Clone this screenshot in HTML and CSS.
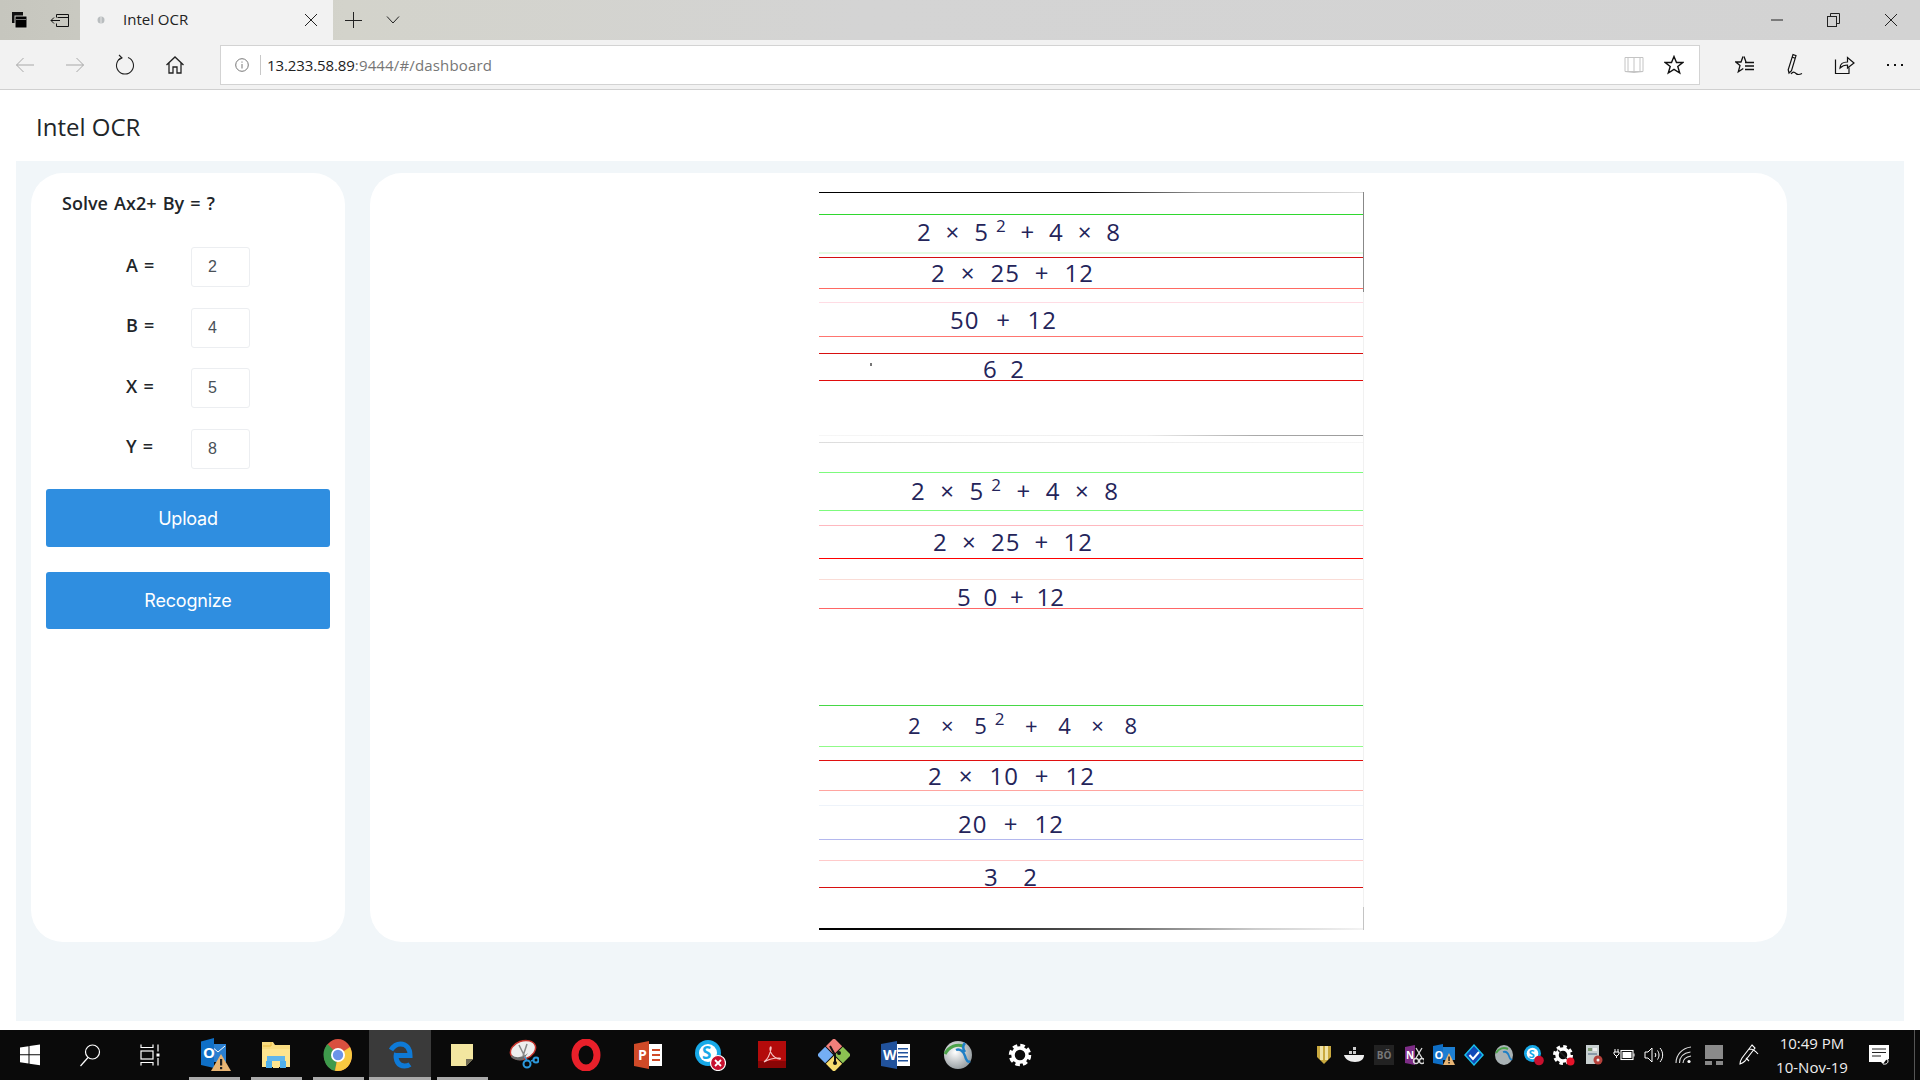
FILE: index.html
```html
<!DOCTYPE html>
<html lang="en">
<head>
<meta charset="utf-8">
<title>Intel OCR</title>
<link rel="stylesheet" href="styles.css">
</head>
<body>
<div class="titlebar">
  <div class="tbtn"><svg width="20" height="20" viewBox="0 0 20 20"><rect x="2" y="2" width="11" height="11" fill="#111"/><rect x="5" y="6" width="12" height="12" fill="#000" stroke="#d0d0ca" stroke-width="1"/><rect x="6" y="9" width="10" height="1" fill="#777"/></svg></div>
  <div class="tbtn"><svg width="20" height="20" viewBox="0 0 20 20" fill="none" stroke="#111"><path d="M6.500 4.500h12v12h-12v-3M6.500 7.500v-3M7.500 7.500h11"/><path d="M1 10.500h9M4 7.500l-3 3 3 3"/></svg></div>
  <div class="tab">
    <svg class="favicon" width="10" height="10" viewBox="0 0 10 10"><circle cx="5" cy="5" r="3.500" fill="#b9bdbf"/><path d="M5 1.500v7" stroke="#e6e6e6"/></svg>
    <span class="tabtitle">Intel OCR</span>
    <svg class="tabclose" width="14" height="14" viewBox="0 0 14 14" stroke="#222" fill="none"><path d="M1 1l12 12M13 1L1 13"/></svg>
  </div>
  <div class="tbtn"><svg width="18" height="18" viewBox="0 0 18 18" stroke="#222" fill="none"><path d="M9.500 1v16M1 9.500h17"/></svg></div>
  <div class="tbtn"><svg width="14" height="10" viewBox="0 0 14 10" stroke="#222" fill="none"><path d="M1 1.500l6 6.500 6-6.500"/></svg></div>
  <div class="winctl">
    <div class="wbtn"><svg width="12" height="2" viewBox="0 0 12 2" stroke="#222"><path d="M0 1h12"/></svg></div>
    <div class="wbtn"><svg width="13" height="14" viewBox="0 0 13 14" stroke="#222" fill="none"><rect x=".5" y="3.500" width="9" height="10"/><path d="M3.500 3.500v-3h9v10h-3"/></svg></div>
    <div class="wbtn"><svg width="14" height="14" viewBox="0 0 14 14" stroke="#222" fill="none"><path d="M1 1l12 12M13 1L1 13"/></svg></div>
  </div>
</div>

<div class="toolbar">
  <div class="navbtn"><svg width="20" height="16" viewBox="0 0 20 16" stroke="#a8a8a8" fill="none"><path d="M19 8H1.500M8.500 1l-7 7 7 7"/></svg></div>
  <div class="navbtn"><svg width="20" height="16" viewBox="0 0 20 16" stroke="#a8a8a8" fill="none"><path d="M1 8h17.500M11.500 1l7 7-7 7"/></svg></div>
  <div class="navbtn"><svg width="20" height="22" viewBox="0 0 20 22" stroke="#222" fill="none" stroke-width="1.100"><path d="M7 3.600A8.500 8.500 0 1 0 13 3.600"/><path d="M4 1l3 3-3.500 2"/></svg></div>
  <div class="navbtn"><svg width="20" height="20" viewBox="0 0 20 20" stroke="#222" fill="none" stroke-width="1.300"><path d="M1.500 10L10 2l8.500 8M4 8v10h4v-6h4v6h4V8"/></svg></div>
  <div class="address">
    <svg class="info" width="14" height="14" viewBox="0 0 14 14" fill="none" stroke="#777"><circle cx="7" cy="7" r="6.300"/><path d="M7 6v4.500M7 3.500v1.200"/></svg>
    <span class="url"><span class="urlhost">13.233.58.89</span>:9444/#/dashboard</span>
    <svg class="book" width="20" height="18" viewBox="0 0 20 18" fill="none" stroke="#c4c4c4"><path d="M1 1.500h18v14H1zM10 1.500v15M1 15.500l9 1 9-1"/><path d="M4 1.500v14M16 1.500v14"/></svg>
    <svg class="star" width="20" height="20" viewBox="0 0 20 20" fill="none" stroke="#111" stroke-width="1.400"><path d="M10 1.500l2.500 6h6.300l-5 4 1.900 6.500L10 14.300 4.300 18l1.900-6.500-5-4h6.300z"/></svg>
  </div>
  <div class="tools">
    <div class="navbtn"><svg width="20" height="20" viewBox="0 0 20 20" fill="none" stroke="#111" stroke-width="1.300"><path d="M8 1.500L6 7H.8l4.200 3.600-1.700 6.200 5-3.300"/><path d="M9 1.500L11 7M10 7.500h9M10 11h9M10 14.500h9"/></svg></div>
    <div class="navbtn"><svg width="20" height="24" viewBox="0 0 20 24" fill="none" stroke="#111" stroke-width="1.200"><path d="M8 1.500l3 1.200-4.500 15L4 20l-.8-3.300zM7 4l3 1.200"/><path d="M6 21c2-3 3.500-2 5-.5s3 1.500 6 0"/></svg></div>
    <div class="navbtn"><svg width="22" height="20" viewBox="0 0 22 20" fill="none" stroke="#111" stroke-width="1.200"><path d="M1.500 4.500v14h13.500v-6M1.500 18.500h13.500"/><path d="M6 13c0-4 3-6 7.500-6V2.500L20 8l-6.500 5V10C10 10 8 11 6 13z"/></svg></div>
    <div class="navbtn"><svg width="20" height="4" viewBox="0 0 20 4" fill="#111"><rect x="2" y="1" width="2" height="2"/><rect x="9" y="1" width="2" height="2"/><rect x="16" y="1" width="2" height="2"/></svg></div>
  </div>
</div>

<div class="page">
  <header class="apphead">Intel OCR</header>
  <main class="content">
    <section class="card side">
      <h2 class="solve">Solve Ax2+ By = ?</h2>
      <div class="field"><label class="flabel">A =</label><input class="finput" value="2"></div>
      <div class="field"><label class="flabel">B =</label><input class="finput" value="4"></div>
      <div class="field"><label class="flabel">X =</label><input class="finput" value="5"></div>
      <div class="field"><label class="flabel">Y =</label><input class="finput" value="8"></div>
      <button class="action first">Upload</button>
      <button class="action second">Recognize</button>
    </section>
    <section class="card viewer">
      <div class="sheet">
        <i class="rule k top"></i>
        <i class="rule r2"></i><i class="rule r3"></i><i class="rule r4"></i><i class="rule r5"></i><i class="rule r6"></i><i class="rule r7"></i><i class="rule r8"></i><i class="rule r9"></i><i class="rule r10"></i>
        <i class="rule r11"></i><i class="rule r12"></i><i class="rule r13"></i><i class="rule r14"></i><i class="rule r15"></i><i class="rule r16"></i>
        <i class="rule r17"></i><i class="rule r18"></i><i class="rule r19"></i><i class="rule r20"></i><i class="rule r21"></i><i class="rule r22"></i><i class="rule r23"></i><i class="rule r24"></i><i class="rule r25"></i>
        <i class="rule k bottom"></i>
        <i class="edge e1"></i><i class="edge e2"></i><i class="edge e3"></i><i class="speck"></i>
        <div class="hw l1">2 × 5<sup>2</sup> + 4 × 8</div>
        <div class="hw l2">2 × 25 + 12</div>
        <div class="hw l3">50 + 12</div>
        <div class="hw l4">6 2</div>
        <div class="hw l5">2 × 5<sup>2</sup> + 4 × 8</div>
        <div class="hw l6">2 × 25 + 12</div>
        <div class="hw l7">5 0 + 12</div>
        <div class="hw l8">2 × 5<sup>2</sup> + 4 × 8</div>
        <div class="hw l9">2 × 10 + 12</div>
        <div class="hw l10">20 + 12</div>
        <div class="hw l11">3 2</div>
      </div>
    </section>
  </main>
</div>

<footer class="taskbar">
  <div class="sysbtn"><svg width="22" height="22" viewBox="0 0 22 22" fill="#fff"><path d="M1 3.500l8.500-1.200V10.300H1zM10.500 2.100L21 .6v9.700H10.500zM1 11.300h8.500v8.200L1 18.300zM10.500 11.300H21v10L10.500 19.800z"/></svg></div>
  <div class="sysbtn"><svg width="22" height="24" viewBox="0 0 22 24" fill="none" stroke="#fff" stroke-width="1.200"><circle cx="13.500" cy="9" r="7"/><path d="M9 14.500L1.500 23"/></svg></div>
  <div class="sysbtn"><svg width="20" height="22" viewBox="0 0 20 22" fill="none" stroke="#fff" stroke-width="1.200"><path d="M1 .5v3h12v-3M1 21.500v-3h12v3"/><rect x="1" y="7" width="12" height="8"/><path d="M18 .5v7M18 14v7.500"/><rect x="16.500" y="9.500" width="3" height="3" fill="#fff" stroke="none"/></svg></div>
  <div class="apps">
    <div class="app on first-app"><svg width="32" height="34" viewBox="0 0 32 34"><path d="M10 6h16v18H10z" fill="#2a7fd0"/><path d="M11 8l7 6 7-6" fill="none" stroke="#fff"/><path d="M1 3.500L14 0v30L1 27z" fill="#0f6fc6"/><text class="ic-text" x="3" y="20" font-size="15" fill="#fff">O</text><path d="M21 16l10 17H11z" fill="#e8b574"/><rect x="20" y="21" width="2.200" height="6.500" fill="#222"/><rect x="20" y="29" width="2.200" height="2.200" fill="#222"/></svg></div>
    <div class="app on"><svg width="30" height="28" viewBox="0 0 30 28"><path d="M1 1h11l2 3h15v22H1z" fill="#f9dc80"/><rect x="1" y="8" width="28" height="18" fill="#fde58f"/><path d="M10 1v4h-8" fill="none" stroke="#e8b93f"/><path d="M6 15h18v5H6z" fill="#5fb6ec"/><path d="M5 20h6v7H5zM19 20h6v7h-6z" fill="#4fb0ec"/><rect x="12" y="23" width="6" height="4" fill="#fde58f"/></svg></div>
    <div class="app on"><svg width="30" height="32" viewBox="0 0 30 32"><ellipse cx="15" cy="16" rx="14" ry="16" fill="#d9503f"/><path d="M15 16L4.500 5A14 16 0 0 0 12 31.800z" fill="#3e9a4b"/><path d="M15 16L12 31.800c1 .2 2 .2 3 .2 8 0 14-7 14-16 0-3-1-6-2-8z" fill="#f7c940"/><circle cx="15" cy="16" r="7" fill="#fff"/><circle cx="15" cy="16" r="5.200" fill="#6b94e8"/></svg></div>
    <div class="app on cur"><svg width="26" height="28" viewBox="0 0 26 28" fill="none" stroke="#0e7ad7" stroke-width="5"><path d="M9 14.500h14C23 7 19 3 13.500 3c-3.500 0-7 2-9.500 6"/><path d="M9.500 12c-1.500 7 1.500 13 8 13 2 0 4-.5 5.500-1.500"/></svg></div>
    <div class="app on"><svg width="24" height="24" viewBox="0 0 24 24"><path d="M1 1h22v15l-7 7H1z" fill="#f3e6a0"/><path d="M23 16h-7v7z" fill="#6f6a55"/></svg></div>
    <div class="app"><svg width="30" height="32" viewBox="0 0 30 32"><ellipse cx="14" cy="11" rx="13" ry="9" transform="rotate(-20 14 11)" fill="#eee" stroke="#c7332c" stroke-width="1.500"/><path d="M3 16c4 4 12 2 16-2l-5 7c-4 1-9 0-12-3z" fill="#6c6c6c"/><path d="M18 5l-4 12M10 6l6 12" stroke="#888" stroke-width="1.500"/><circle cx="18" cy="25" r="3.500" fill="none" stroke="#2c9ade" stroke-width="2"/><circle cx="27" cy="21" r="2.500" fill="none" stroke="#2c9ade" stroke-width="2"/><path d="M16 18l2 4M22 22l3-1" stroke="#2c9ade" stroke-width="1.500"/></svg></div>
    <div class="app"><svg width="30" height="32" viewBox="0 0 30 32" fill="none"><ellipse cx="15" cy="16" rx="11" ry="13" stroke="#e8202a" stroke-width="7"/></svg></div>
    <div class="app"><svg width="28" height="28" viewBox="0 0 28 28"><rect x="13" y="3" width="15" height="22" fill="#fff"/><path d="M0 3l15-3v28L0 25z" fill="#cf4a28"/><rect x="18" y="8" width="8" height="2" fill="#cf4a28"/><rect x="18" y="13" width="8" height="2" fill="#cf4a28"/><rect x="18" y="18" width="8" height="2" fill="#cf4a28"/><text class="ic-text" x="4" y="19" font-size="14" fill="#fff">P</text></svg></div>
    <div class="app"><svg width="32" height="32" viewBox="0 0 32 32"><circle cx="14" cy="14" r="13" fill="#17a9e8"/><circle cx="14" cy="14" r="9" fill="#fff"/><text class="ic-text" x="8" y="20" font-size="17" fill="#17a9e8">S</text><circle cx="24" cy="24" r="7.500" fill="#c8102e" stroke="#fff" stroke-width="1.200"/><path d="M21 21l6 6M27 21l-6 6" stroke="#fff" stroke-width="1.800"/></svg></div>
    <div class="app"><svg width="28" height="28" viewBox="0 0 28 28"><rect width="28" height="27" fill="#b30b0b"/><rect y="20" width="28" height="7" fill="#8a0505"/><path d="M6 21c4-3 6-8 7-13 .5-3-1-3-1 0s3 9 9 10c2 .4 2-1 0-1-4 0-10 1-15 4z" fill="none" stroke="#f5c4c4" stroke-width="1.200"/></svg></div>
    <div class="app"><svg width="32" height="32" viewBox="0 0 32 32"><g transform="rotate(45 16 16)"><rect x="4" y="4" width="11.500" height="11.500" fill="#f07f7b"/><rect x="16.500" y="4" width="11.500" height="11.500" fill="#8cc152"/><rect x="4" y="16.500" width="11.500" height="11.500" fill="#74aef4"/><rect x="16.500" y="16.500" width="11.500" height="11.500" fill="#f7dc6f"/></g><path d="M12 7l5 9v8" stroke="#111" stroke-width="2" fill="none"/><circle cx="21" cy="14" r="2" fill="#111"/><circle cx="17" cy="24" r="2" fill="#111"/></svg></div>
    <div class="app"><svg width="30" height="28" viewBox="0 0 30 28"><rect x="13" y="3" width="16" height="22" fill="#fff"/><path d="M0 3l16-3v28L0 25z" fill="#21529c"/><rect x="17" y="7" width="10" height="1.500" fill="#21529c"/><rect x="17" y="11" width="10" height="1.500" fill="#21529c"/><rect x="17" y="15" width="10" height="1.500" fill="#21529c"/><rect x="17" y="19" width="10" height="1.500" fill="#21529c"/><text class="ic-text" x="2" y="19" font-size="14" fill="#fff">W</text></svg></div>
    <div class="app"><svg width="30" height="30" viewBox="0 0 30 30"><defs><radialGradient id="glb" cx=".4" cy=".4" r=".7"><stop offset="0" stop-color="#fff"/><stop offset="1" stop-color="#8a9296"/></radialGradient></defs><circle cx="15" cy="15" r="14" fill="url(#glb)"/><path d="M2 14C6 6 14 4 20 6" fill="none" stroke="#4ca24a" stroke-width="3"/><path d="M13 10c4-2 8 2 9 6s3 7 5 5M22 3c-3 3-2 6 0 9" fill="none" stroke="#1e7fc6" stroke-width="2.500"/></svg></div>
    <div class="app"><svg width="24" height="24" viewBox="0 0 24 24" fill="none" stroke="#fff"><circle cx="12" cy="12" r="7" stroke-width="3.500"/><circle cx="12" cy="12" r="9.500" stroke-width="3.500" stroke-dasharray="4.500 2.960"/></svg></div>
  </div>
  <div class="tray">
    <div class="ti"><svg width="16" height="20" viewBox="0 0 16 20"><path d="M1 1h14v11l-7 7-7-7z" fill="#c9a93f"/><path d="M4 1h3v14H4zM9 1h3v14H9z" fill="#f0e3a8"/></svg></div>
    <div class="ti"><svg width="20" height="16" viewBox="0 0 20 16" fill="#eee"><path d="M0 8h20c0 4-3 7-9 7-6 0-10-3-11-7z"/><path d="M5 4h3v3H5zM9 4h3v3H9zM9 0h3v3H9z" fill="#ccc"/></svg></div>
    <div class="ti"><div class="bo"><span>B</span><span>Ö</span></div></div>
    <div class="ti"><svg width="20" height="20" viewBox="0 0 20 20"><path d="M1 2l10-2v20L1 18z" fill="#7d2d86"/><text class="ic-text" x="2" y="14" font-size="10" fill="#fff">N</text><path d="M12 3l6 10M18 3l-6 10" stroke="#ddd" stroke-width="1.300"/><circle cx="12" cy="16" r="2.500" fill="none" stroke="#ddd" stroke-width="1.300"/><circle cx="18" cy="16" r="2.500" fill="none" stroke="#ddd" stroke-width="1.300"/></svg></div>
    <div class="ti"><svg width="22" height="22" viewBox="0 0 22 22"><path d="M9 3h13v13H9z" fill="#1d7fd2"/><path d="M0 2l10-2v21L0 19z" fill="#0f6fc6"/><text class="ic-text" x="1.500" y="14.500" font-size="11" fill="#fff">O</text><path d="M16 9l6 12H10z" fill="#e8b574"/><rect x="15.300" y="12.500" width="1.500" height="4.500" fill="#222"/><rect x="15.300" y="18" width="1.500" height="1.500" fill="#222"/></svg></div>
    <div class="ti"><svg width="20" height="22" viewBox="0 0 20 22"><path d="M10 0l10 11-10 11L0 11z" fill="#18c3ee"/><path d="M10 2l8 9-8 9-8-9z" fill="#1148b8"/><path d="M5.500 11l3.500 4 6-7" fill="none" stroke="#fff" stroke-width="2"/></svg></div>
    <div class="ti"><svg width="18" height="20" viewBox="0 0 18 20"><ellipse cx="9" cy="10" rx="9" ry="10" fill="#a9b2b4"/><path d="M1 8c3-5 8-6 12-4" fill="none" stroke="#4ca24a" stroke-width="2"/><path d="M8 7c3-1 5 1 6 4s2 4 3 3" fill="none" stroke="#1e7fc6" stroke-width="1.800"/></svg></div>
    <div class="ti"><svg width="20" height="22" viewBox="0 0 20 22"><circle cx="8.500" cy="9.500" r="8.500" fill="#17a9e8"/><circle cx="8.500" cy="9.500" r="5.800" fill="#fff"/><text class="ic-text" x="4.800" y="13.500" font-size="11" fill="#17a9e8">S</text><circle cx="15" cy="16.500" r="4.800" fill="#c8102e"/></svg></div>
    <div class="ti"><svg width="22" height="22" viewBox="0 0 22 22" fill="none"><circle cx="10" cy="11" r="6" stroke="#fff" stroke-width="3.500"/><circle cx="10" cy="11" r="8.500" stroke="#fff" stroke-width="3" stroke-dasharray="3.500 3.170"/><path d="M5 6l9 9" stroke="#222" stroke-width="1.500"/><circle cx="17.500" cy="17.500" r="4" fill="#e6142a"/></svg></div>
    <div class="ti"><svg width="18" height="22" viewBox="0 0 18 22"><rect x="1" y="1" width="13" height="19" fill="#c8d0d0"/><rect x="3" y="4" width="4" height="3" fill="#7e9a74"/><rect x="8" y="4" width="4" height="3" fill="#eee"/><rect x="3" y="9" width="9" height="2" fill="#8a9aa8"/><circle cx="13" cy="16" r="4.500" fill="#b5413b"/><circle cx="13" cy="16" r="1.500" fill="#eee"/></svg></div>
    <div class="ti"><svg width="22" height="14" viewBox="0 0 22 14" fill="none" stroke="#fff"><path d="M2 1v3M5 1v3M1 4h5v2l-2 2H3L1 6zM3.500 8v2"/><rect x="8" y="2.500" width="12" height="9" stroke-width="1.100"/><rect x="9.500" y="4" width="9" height="6" fill="#fff" stroke="none"/><path d="M21 5.500v3"/></svg></div>
    <div class="ti"><svg width="20" height="18" viewBox="0 0 20 18" fill="none" stroke="#fff"><path d="M1 6h3l4-4v14l-4-4H1z"/><path d="M11 7c1 1.300 1 2.700 0 4M13.500 4.500c2 3 2 6 0 9M16 2c3.500 4 3.500 10 0 14"/></svg></div>
    <div class="ti"><svg width="18" height="18" viewBox="0 0 18 18" fill="none" stroke="#ddd"><path d="M1 17C1 9 7 2 16 1M4.500 17c0-6 4-10 11-11M8 17c0-3 3-6 8-7" stroke-width="1.100"/><circle cx="14" cy="15.500" r="1.600" fill="#fff" stroke="none"/></svg></div>
    <div class="ti"><svg width="18" height="20" viewBox="0 0 18 20"><rect width="18" height="14" fill="#8a8a8a"/><rect y="16" width="7" height="4" fill="#888"/><rect x="11" y="16" width="7" height="4" fill="#888"/></svg></div>
    <div class="ti pen"><svg width="22" height="22" viewBox="0 0 22 22" fill="none" stroke="#fff" stroke-width="1.100"><path d="M14 1l3 3L7 17c-2 2-5 3-5 3s0-3 2-6zM11 5c3 0 6 1 9 5M8 14l3 3"/></svg></div>
    <div class="clock"><div>10:49 PM</div><div>10-Nov-19</div></div>
    <div class="notify"><svg width="20" height="20" viewBox="0 0 20 20"><path d="M0 0h20v14l-3 1-3 4-2-2H0z" fill="#fff"/><path d="M3 4h14M3 7.500h14M3 11h9" stroke="#222"/><path d="M13 15c2-3 6-2 6 1s-3 3.500-5 3" fill="none" stroke="#fff"/></svg></div>
    <div class="showdesk"></div>
  </div>
</footer>
</body>
</html>
```
FILE: styles.css
```css
* { box-sizing: border-box; }
html, body { margin: 0; padding: 0; }
body { width: 1920px; height: 1080px; overflow: hidden; background: #fff; font-family: "Open Sans", "Liberation Sans", sans-serif; display: flex; flex-direction: column; }
svg { display: block; flex: none; }
.ic-text { font-family: "Open Sans", sans-serif; font-weight: 700; }

.titlebar { height: 40px; display: flex; background: linear-gradient(90deg, #c6c6be 0%, #c9c9c1 4%, #d3d3cb 18%, #d4d4d4 45%, #d3d3d3 100%); flex: none; }
.tbtn { width: 40px; display: flex; align-items: center; justify-content: center; }
.tab { width: 253px; background: #f2f2f2; display: flex; align-items: center; padding-left: 16px; }
.favicon { margin-right: 17px; }
.tabtitle { font-size: 15px; line-height: 20px; padding-bottom: 2px; color: #222; flex: 1; }
.tabclose { margin-right: 15px; }
.winctl { margin-left: auto; margin-right: 1px; display: flex; }
.wbtn { width: 57px; display: flex; align-items: center; justify-content: center; }

.toolbar { height: 50px; background: #f2f2f2; border-bottom: 1px solid #d0d0d0; display: flex; align-items: center; flex: none; padding-top: 1px; }
.navbtn { width: 50px; height: 40px; display: flex; align-items: center; justify-content: center; }
.address { width: 1480px; height: 40px; margin-left: 20px; background: #fff; border: 1px solid #d3d3d3; display: flex; align-items: center; padding-left: 14px; }
.info { margin-right: 11px; }
.url { flex: 1; font-size: 15px; color: #767676; border-left: 1px solid #c8c8c8; padding-left: 6px; letter-spacing: .15px; }
.urlhost { color: #222; letter-spacing: -.1px; }
.book { margin-right: 20px; }
.star { margin-right: 15px; }
.tools { margin-left: 20px; display: flex; }

.page { height: 940px; display: flex; flex-direction: column; flex: none; }
.apphead { height: 71px; padding: 20px 0 0 36px; font-size: 24px; line-height: 33px; color: #212529; }
.content { width: 1888px; height: 860px; margin-left: 16px; background: #f1f6f9; padding: 12px 0 0 15px; display: flex; gap: 25px; }
.card { height: 769px; background: #fff; border-radius: 32px; }
.side { width: 314px; padding: 18px 15px 0; }
.solve { margin: 0 0 32px 16px; font-size: 18px; line-height: 24px; font-weight: 600; word-spacing: 1.500px; color: #212529; }
.field { display: flex; align-items: center; margin: 0 0 20.500px 80px; height: 40px; }
.flabel { width: 65px; font-size: 18px; font-weight: 600; word-spacing: 1.500px; color: #212529; padding-bottom: 5px; }
.finput { width: 59px; height: 40px; border: 1px solid #eceef1; border-radius: 3px; padding: 0 0 0 16px; font: 16px "Liberation Sans", sans-serif; color: #495057; background: #fff; }
.action { display: block; width: 284px; height: 58px; margin-top: 25px; border: 0; border-radius: 3px; background: #2f8ee0; color: #fff; font: 400 18px Inter, "Open Sans", sans-serif; letter-spacing: -.2px; padding: 0; }
.action.first { margin-top: 0; }
.action.second { height: 57px; padding-bottom: 1px; }

.viewer { width: 1417px; padding: 19px 0 0 449px; }
.sheet { position: relative; width: 545px; height: 738px; }
.rule { position: absolute; left: 0; width: 545px; height: 1px; background: #e00; }
.rule.k { background: linear-gradient(90deg, #000 0%, #000 50%, #999 70%, #ddd 100%); }
.top { top: 0; }
.bottom { top: 736px; height: 2px !important; background: linear-gradient(90deg, #000 0%, #111 25%, #666 55%, #ccc 80%, #f4f4f4 100%) !important; }
.r2 { top: 22px; background: #2fd82f; }
.r3 { top: 60px; background: #e4fbe4; height: 2px; }
.r4 { top: 65px; background: #d40f0f; }
.r5 { top: 96px; background: #ff6a62; }
.r6 { top: 110px; background: #ffdce4; }
.r7 { top: 144px; background: #ff7570; }
.r8 { top: 161px; background: #d80f0f; }
.r9 { top: 188px; background: #e00c0c; }
.r10 { top: 243px; background: linear-gradient(90deg, #f6f6f6, #eee 60%, #aaa 80%, #999); }
.r11 { top: 250px; background: linear-gradient(90deg, #ddd, #eee 60%, #f6f6f6); }
.r12 { top: 280px; background: #7dfb7d; }
.r13 { top: 318px; background: #7dfb7d; }
.r14 { top: 333px; background: #ffb8bf; }
.r15 { top: 366px; background: #f00; }
.r16 { top: 387px; background: #fadcd6; }
.r17 { top: 416px; background: #ff6666; }
.r18 { top: 513px; background: #46d846; }
.r19 { top: 554px; background: #90fb88; }
.r20 { top: 568px; background: #e01010; }
.r21 { top: 598px; background: #ffa5a0; }
.r22 { top: 613px; background: #eef3fa; }
.r23 { top: 647px; background: #b4b8ee; }
.r24 { top: 668px; background: #ffcaca; }
.r25 { top: 695px; background: #d81010; }
.edge { position: absolute; width: 1px; right: 0; }
.e1 { top: 0; height: 100px; background: #888; }
.e2 { top: 100px; height: 615px; background: #f1f1f1; }
.e3 { top: 715px; height: 23px; background: #c4c4c4; }
.speck { position: absolute; left: 51px; top: 171px; width: 2px; height: 3px; background: #777; }

.hw { position: absolute; color: #24245a; font-weight: 400; font-size: 24px; line-height: 24px; height: 24px; text-align: justify; text-align-last: justify; }
.hw sup { font-size: 17px; line-height: 0; vertical-align: 9px; margin-left: 8px; }
.l1 { left: 98px; width: 203px; top: 28px; }
.l2 { left: 112px; width: 163px; top: 69px; letter-spacing: 1px; }
.l3 { left: 131px; width: 107px; top: 116px; letter-spacing: 1px; }
.l4 { left: 164px; width: 41px; top: 165px; }
.l5 { left: 92px; width: 207px; top: 287px; }
.l6 { left: 114px; width: 160px; top: 338px; letter-spacing: 1px; }
.l7 { left: 138px; width: 107px; top: 393px; }
.l8 { left: 89px; width: 229px; top: 521px; font-size: 22px; }
.l9 { left: 109px; width: 167px; top: 572px; letter-spacing: 1px; }
.l10 { left: 139px; width: 106px; top: 620px; letter-spacing: 1px; }
.l11 { left: 165px; width: 53px; top: 673px; }

.taskbar { height: 50px; background: #0a0a0a; display: flex; flex: none; }
.sysbtn { width: 60px; display: flex; align-items: center; justify-content: center; }
.apps { display: flex; margin-left: 3px; }
.app { width: 62px; position: relative; display: flex; align-items: center; justify-content: center; }
.first-app svg { margin-left: 4px; }
.app.on::after { content: ""; position: absolute; left: 6px; right: 5px; bottom: 0; height: 3px; background: #aaa; }
.app.cur { background: #3a3a3a; }
.app.cur::after { left: 0; right: 0; }
.tray { margin-left: auto; display: flex; align-items: center; height: 50px; color: #fff; }
.ti { width: 30px; display: flex; align-items: center; justify-content: center; height: 50px; }
.pen { margin-left: 5px; }
.bo { width: 20px; height: 20px; background: #222; color: #777; font-size: 10px; line-height: 20px; display: flex; justify-content: center; font-weight: 700; }
.clock { width: 76px; margin-left: 10px; text-align: center; font-size: 15px; line-height: 24px; color: #eee; white-space: nowrap; }
.notify { width: 58px; display: flex; justify-content: center; }
.showdesk { width: 6px; height: 50px; margin-left: 6px; border-left: 1px solid #555; }
```
